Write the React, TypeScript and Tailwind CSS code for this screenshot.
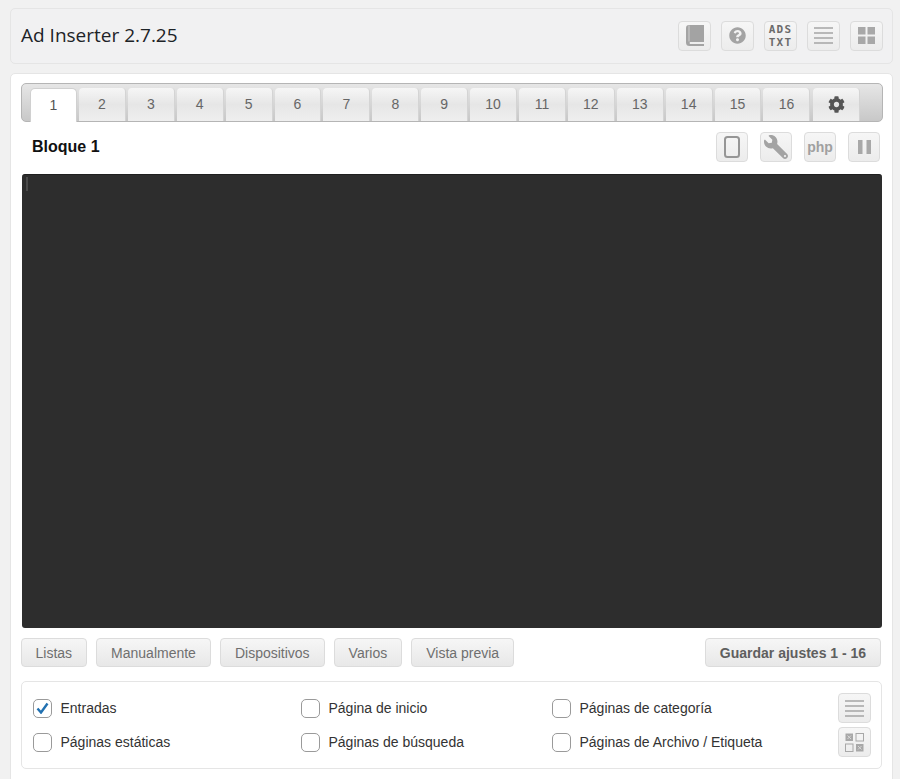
import React from "react";
import { FaCog, FaQuestionCircle, FaWrench } from "react-icons/fa";

const ARIAL = "font-['Liberation_Sans',Arial,sans-serif]";

const tabs = ["2", "3", "4", "5", "6", "7", "8", "9", "10", "11", "12", "13", "14", "15", "16"];

const tabStyle = "w-[46.9px] h-[33px] flex items-center justify-center rounded-t-[4px] border-r border-[#d4d4d4] bg-gradient-to-b from-[#f6f6f6] via-[#e6e6e6] to-[#efefef]";

const IconButton = ({ children, className = "w-[33px]" }: { children: React.ReactNode; className?: string }) => (
    <div className={"h-[30px] flex items-center justify-center rounded-[4px] border border-[#dcdcdc] bg-gradient-to-b from-[#f6f6f6] to-[#ececec] " + className}>
        {children}
    </div>
);

const Book = () => (
    <svg width="18" height="21" viewBox="0 0 18 21">
        <path d="M3 0h15v17H4a1.500 1.500 0 0 0 0 2h14v2H3.500A3.500 3.500 0 0 1 0 17.500V3a3 3 0 0 1 3-3z" fill="#a3a3a3" />
        <path d="M3 0.500v16" stroke="#cfcfcf" strokeWidth="1" />
    </svg>
);

const Lines = () => (
    <svg width="19" height="17" viewBox="0 0 19 17">
        <path d="M0 1h19M0 6h19M0 11h19M0 16h19" stroke="#a5a5a5" strokeWidth="1.700" />
    </svg>
);

const Grid = () => (
    <svg width="17" height="17" viewBox="0 0 17 17" fill="#a8a8a8">
        <rect width="7.500" height="7.500" />
        <rect x="9.500" width="7.500" height="7.500" />
        <rect y="9.500" width="7.500" height="7.500" />
        <rect x="9.500" y="9.500" width="7.500" height="7.500" />
    </svg>
);

const Tablet = () => (
    <svg width="16" height="22" viewBox="0 0 16 22">
        <rect x="1" y="1" width="14" height="20" rx="2.500" fill="none" stroke="#969696" strokeWidth="2" />
    </svg>
);

const Pause = () => (
    <svg width="13" height="14" viewBox="0 0 13 14" fill="#a8a8a8">
        <rect width="4.500" height="14" />
        <rect x="8.500" width="4.500" height="14" />
    </svg>
);

const QrGrid = () => (
    <svg width="19" height="19" viewBox="0 0 19 19">
        <rect x="0.500" y="0.500" width="7.500" height="7.500" fill="#a8a8a8" />
        <rect x="11" y="0.500" width="7.500" height="7.500" fill="none" stroke="#a8a8a8" />
        <rect x="0.500" y="11" width="7.500" height="7.500" fill="none" stroke="#a8a8a8" />
        <rect x="11" y="11" width="7.500" height="7.500" fill="#a8a8a8" />
        <path d="M2.500 2.500l3.500 3.500M6 2.500L2.500 6M13 13l3.500 3.500M16.500 13L13 16.500" stroke="#d8d8d8" />
    </svg>
);

const Check = ({ label, checked = false }: { label: string; checked?: boolean }) => (
    <div className="flex items-center gap-[8.500px]">
        <div className="w-[19px] h-[19px] rounded-[5px] border border-[#9a9a9a] bg-white flex items-center justify-center">
            {checked && (
                <svg width="13" height="12" viewBox="0 0 13 12">
                    <path d="M1.500 6.500L5 10.500 11.500 1.500" fill="none" stroke="#2271b1" strokeWidth="2.400" />
                </svg>
            )}
        </div>
        <span className="text-[14px] leading-none text-[#333333]">{label}</span>
    </div>
);

const ActionButton = ({ label }: { label: string }) => (
    <div className="h-[29px] px-[14px] pt-px flex items-center rounded-[4px] border border-[#dcdcdc] bg-gradient-to-b from-[#f6f6f6] to-[#e8e8e8] text-[14px] text-[#6f6f6f]">
        {label}
    </div>
);

export default function App() {
    return (
        <div className={"w-[900px] h-[779px] overflow-hidden bg-[#f1f1f1] pt-2 pl-[10px] pr-[7px] " + ARIAL}>
            <div className="h-[56px] w-[883px] flex items-center justify-between pl-[10px] pr-[9px] pb-px rounded-[5px] border border-[#e5e5e5] bg-[#f1f1f2]">
                <h1 className="font-['Open_Sans',sans-serif] text-[19px] text-[#1d2327]">Ad Inserter 2.7.25</h1>
                <div className="flex items-center gap-[10px]">
                    <IconButton><Book /></IconButton>
                    <IconButton><FaQuestionCircle size={17} color="#a3a3a3" /></IconButton>
                    <IconButton>
                        <div className="font-['DejaVu_Sans_Mono',monospace] font-bold text-[11px] text-[#6b6b6b] text-center tracking-[1.2px]">
                            <div className="leading-[13px]">ADS</div>
                            <div className="leading-[13px]">TXT</div>
                        </div>
                    </IconButton>
                    <IconButton><Lines /></IconButton>
                    <IconButton><Grid /></IconButton>
                </div>
            </div>

            <div className="mt-[9px] h-[720px] rounded-t-[5px] border border-[#e5e5e5] bg-white pt-[9px] px-[10px]">
                <div className="h-[39px] w-[862px] flex items-end gap-[2px] pl-[8px] rounded-[5px] border border-[#b5b5b5] bg-gradient-to-b from-[#e6e6e6] to-[#c8c8c8]">
                    <div className="w-[47px] h-[34px] -mb-px flex items-center justify-center rounded-t-[5px] border border-b-0 border-[#d0d0d0] bg-white text-[14px] text-[#555555]">1</div>
                    {tabs.map((t) => (
                        <div key={t} className={tabStyle + " text-[14px] text-[#666666]"}>{t}</div>
                    ))}
                    <div className={tabStyle + " ml-px"}><FaCog size={17} color="#555555" /></div>
                </div>

                <div className="h-[52px] w-[860px] flex items-center justify-between pl-[11px] pr-px pb-[3px]">
                    <span className="text-[16px] font-bold text-[#111111]">Bloque 1</span>
                    <div className="flex items-center gap-[12px]">
                        <IconButton className="w-[32px]"><Tablet /></IconButton>
                        <IconButton className="w-[32px]"><FaWrench size={24} color="#a3a3a3" className="-scale-x-100" /></IconButton>
                        <IconButton className="w-[32px]"><span className="text-[14px] font-bold text-[#a0a0a0] leading-none">php</span></IconButton>
                        <IconButton className="w-[32px]"><Pause /></IconButton>
                    </div>
                </div>

                <div className="ml-px h-[454px] w-[860px] rounded-[3px] border-t border-[#1f1f1f] bg-[#2d2d2d] pt-[2px] pl-[4px]">
                    <div className="w-[2px] h-[14px] bg-[#4a4a4a]" />
                </div>

                <div className="mt-[10px] w-[860px] flex items-center justify-between">
                    <div className="-ml-[0.5px] flex items-center gap-[9px]">
                        <ActionButton label="Listas" />
                        <ActionButton label="Manualmente" />
                        <ActionButton label="Dispositivos" />
                        <ActionButton label="Varios" />
                        <ActionButton label="Vista previa" />
                    </div>
                    <div className="h-[29px] w-[176px] pt-px flex items-center justify-center rounded-[4px] border border-[#dcdcdc] bg-gradient-to-b from-[#f6f6f6] to-[#e8e8e8] text-[14px] font-bold text-[#5f5f5f]">
                        Guardar ajustes 1 - 16
                    </div>
                </div>

                <div className="mt-[14px] h-[88px] w-[861px] flex items-center rounded-[5px] border border-[#e5e5e5] pl-[11px] pr-[10px]">
                    <div className="flex-1 grid grid-cols-[268px_251px_1fr] gap-y-[15px]">
                        <Check label="Entradas" checked />
                        <Check label="Página de inicio" />
                        <Check label="Páginas de categoría" />
                        <Check label="Páginas estáticas" />
                        <Check label="Páginas de búsqueda" />
                        <Check label="Páginas de Archivo / Etiqueta" />
                    </div>
                    <div className="flex flex-col gap-[4px]">
                        <IconButton><Lines /></IconButton>
                        <IconButton><QrGrid /></IconButton>
                    </div>
                </div>
            </div>
        </div>
    );
}
